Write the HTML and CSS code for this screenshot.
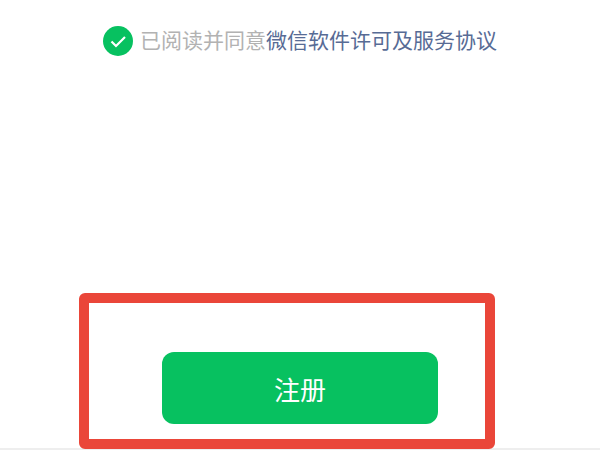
FILE: index.html
```html
<!DOCTYPE html>
<html lang="zh-CN">
<head>
    <meta charset="UTF-8">
    <meta name="viewport" content="width=device-width, initial-scale=1.0">
    <title>注册</title>
    <link rel="stylesheet" href="styles.css">
</head>
<body>
    <div class="pagina">
        <div class="acordo">
            <svg class="check" viewBox="0 0 30 30" width="30" height="30">
                <circle cx="15" cy="15" r="15" fill="#07c160"/>
                <path d="M8.5 15.5l4.5 4.5 9-9" fill="none" stroke="#fff" stroke-width="2.2"/>
            </svg>
            <p class="texto">已阅读并同意<a class="link">微信软件许可及服务协议</a></p>
        </div>
        <div class="destaque">
            <button class="botao">注册</button>
        </div>
    </div>
</body>
</html>
```

FILE: styles.css
```css
* {
    margin: 0;
    padding: 0;
    box-sizing: border-box;
}
body {
    font-family: "Liberation Sans", "Noto Sans CJK SC", sans-serif;
    background-color: #fff;
    height: 450px;
    overflow: hidden;
}
.pagina {
    height: 450px;
    display: flex;
    flex-direction: column;
    align-items: center;
    padding-top: 26px;
    border-bottom: 2px solid #eeeeee;
}
.acordo {
    display: flex;
    align-items: center;
    gap: 7px;
    height: 30px;
    flex-shrink: 0;
}
.check {
    flex-shrink: 0;
}
.texto {
    font-size: 21px;
    line-height: 30px;
    color: #b2b2b2;
    white-space: nowrap;
}
.link {
    color: #576b95;
}
.destaque {
    align-self: flex-start;
    flex-shrink: 0;
    width: 416px;
    height: 156px;
    margin-top: 237px;
    margin-left: 79px;
    padding-top: 49px;
    padding-left: 73px;
    border: 10px solid #ea4639;
    border-radius: 6px;
}
.botao {
    display: block;
    width: 276px;
    height: 72px;
    font-family: inherit;
    font-size: 26px;
    color: #fff;
    background-color: #07c160;
    border: none;
    border-radius: 12px;
}
```
